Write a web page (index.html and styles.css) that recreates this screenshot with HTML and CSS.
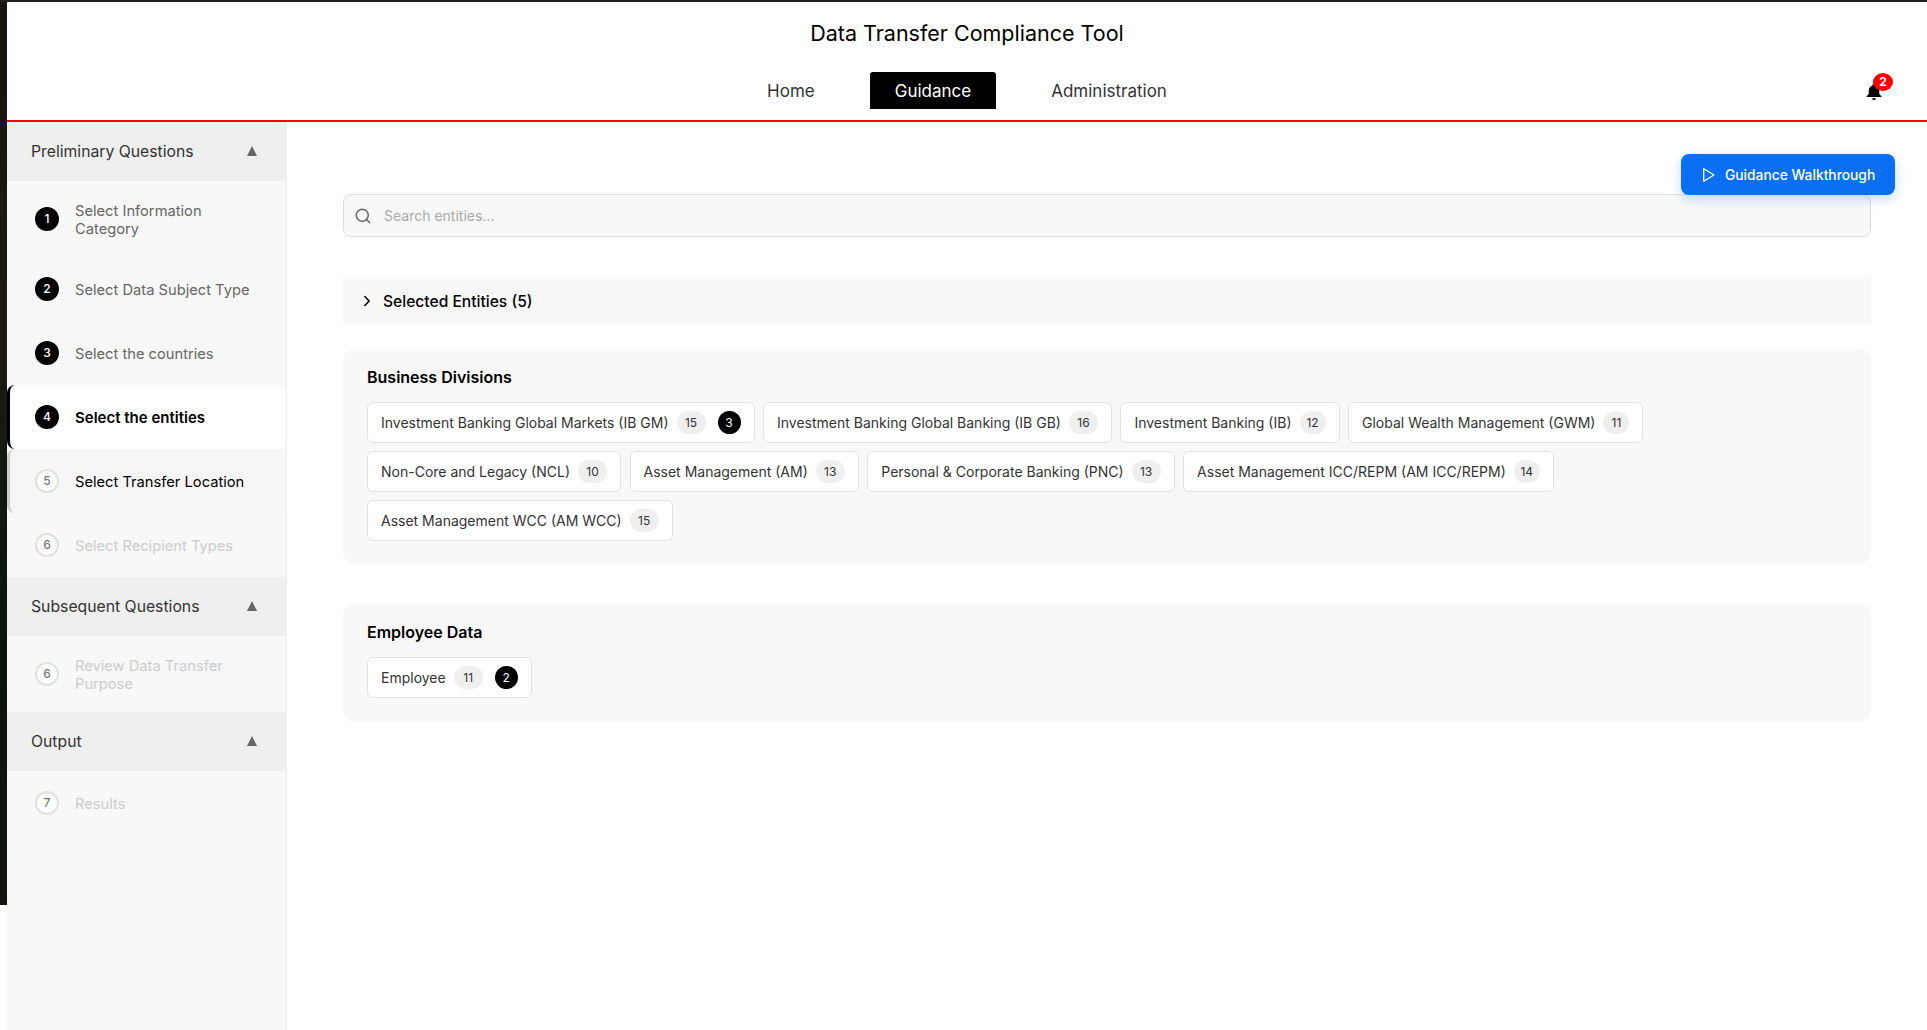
FILE: index.html
```html
<!DOCTYPE html>
<html lang="en">
<head>
  <meta charset="UTF-8">
  <meta name="viewport" content="width=device-width, initial-scale=1">
  <title>Data Transfer Compliance Tool</title>
  <link rel="stylesheet" href="styles.css">
</head>
<body>

  <div class="edge"></div>

  <div class="app">
    <header class="topbar">
      <h1>Data Transfer Compliance Tool</h1>
      <div class="nav-row">
        <nav class="nav">
          <a class="nav-item">Home</a>
          <a class="nav-item active">Guidance</a>
          <a class="nav-item">Administration</a>
        </nav>
        <div class="bell">
          <svg width="18" height="18" viewBox="0 0 24 24" fill="#000"><path d="M12 2a2 2 0 0 0-2 2v.6C6.800 5.500 5 8.300 5 11.500V16l-3 3v1h20v-1l-3-3v-4.500c0-3.200-1.800-6-5-6.900V4a2 2 0 0 0-2-2z"/><path d="M9.500 21.500h5a2.500 2.500 0 0 1-5 0z"/></svg>
          <span class="bell-count">2</span>
        </div>
      </div>
    </header>

    <div class="layout">
      <aside class="sidebar">
        <div class="group-head"><span>Preliminary Questions</span><i class="caret"></i></div>
        <div class="step two-line"><span class="num">1</span><span class="label">Select Information Category</span></div>
        <div class="step"><span class="num">2</span><span class="label">Select Data Subject Type</span></div>
        <div class="step"><span class="num">3</span><span class="label">Select the countries</span></div>
        <div class="step current"><span class="num">4</span><span class="label">Select the entities</span></div>
        <div class="step next"><span class="num">5</span><span class="label">Select Transfer Location</span></div>
        <div class="step off"><span class="num">6</span><span class="label">Select Recipient Types</span></div>

        <div class="group-head"><span>Subsequent Questions</span><i class="caret"></i></div>
        <div class="step two-line off"><span class="num">6</span><span class="label">Review Data Transfer Purpose</span></div>

        <div class="group-head"><span>Output</span><i class="caret"></i></div>
        <div class="step off"><span class="num">7</span><span class="label">Results</span></div>
      </aside>

      <main class="content">
        <div class="toolbar">
          <button class="walkthrough">
            <svg width="16" height="16" viewBox="0 0 16 16" fill="none" stroke="#fff" stroke-width="1.300" stroke-linejoin="round"><path d="M2.700 1.800v12.400L13 8z"/></svg>
            Guidance Walkthrough
          </button>
        </div>

        <div class="search">
          <svg width="18" height="18" viewBox="0 0 24 24" fill="none" stroke="#666" stroke-width="2" stroke-linecap="round"><circle cx="11" cy="11" r="8"/><path d="M21 21l-4.300-4.300"/></svg>
          <span>Search entities...</span>
        </div>

        <div class="selected">
          <svg width="18" height="18" viewBox="0 0 18 18" fill="none" stroke="#000" stroke-width="1.600" stroke-linecap="round" stroke-linejoin="round"><path d="M6.800 4.500L11.200 9l-4.400 4.500"/></svg>
          <span>Selected Entities (5)</span>
        </div>

        <section class="panel">
          <h3>Business Divisions</h3>
          <div class="chips">
            <div class="chip">Investment Banking Global Markets (IB GM) <span class="count">15</span><span class="picked">3</span></div>
            <div class="chip">Investment Banking Global Banking (IB GB) <span class="count">16</span></div>
            <div class="chip">Investment Banking (IB) <span class="count narrow">12</span></div>
            <div class="chip">Global Wealth Management (GWM) <span class="count narrow">11</span></div>
            <div class="chip">Non-Core and Legacy (NCL) <span class="count">10</span></div>
            <div class="chip">Asset Management (AM) <span class="count">13</span></div>
            <div class="chip">Personal &amp; Corporate Banking (PNC) <span class="count">13</span></div>
            <div class="chip">Asset Management ICC/REPM (AM ICC/REPM) <span class="count narrow">14</span></div>
            <div class="chip">Asset Management WCC (AM WCC) <span class="count">15</span></div>
          </div>
        </section>

        <section class="panel employee">
          <h3>Employee Data</h3>
          <div class="chips">
            <div class="chip">Employee <span class="count">11</span><span class="picked">2</span></div>
          </div>
        </section>
      </main>
    </div>
  </div>

</body>
</html>
```

FILE: styles.css
```css
* {
  box-sizing: border-box;
}
html, body {
  height: 100%;
}
body {
  margin: 0;
  display: flex;
  align-items: flex-start;
  font-family: Inter, 'Noto Sans', sans-serif;
  color: #000;
  background: #fff;
  border-top: 2px solid #222;
  overflow: hidden;
}
.edge {
  flex: 0 0 7px;
  height: 903px;
  background: linear-gradient(180deg, #17140f, #1a1a12 40%, #0c1410 70%, #141411);
}
.app {
  flex: 1;
  min-width: 0;
  height: 100%;
  display: flex;
  flex-direction: column;
}

/* header */
.topbar {
  height: 120px;
  flex: none;
  border-bottom: 2px solid #f00;
  padding-top: 17px;
  text-align: center;
}
.topbar h1 {
  margin: 0;
  font-size: 21.500px;
  line-height: 28px;
  font-weight: 400;
}
.nav-row {
  display: grid;
  grid-template-columns: 1fr auto 1fr;
  margin-top: 25px;
}
.nav {
  grid-column: 2;
  display: flex;
  gap: 31px;
}
.nav-item {
  height: 37px;
  padding: 0 24.500px;
  font-size: 17px;
  line-height: 39px;
  color: #333;
}
.nav-item.active {
  background: #000;
  color: #fff;
  border-radius: 3px 3px 0 0;
}
.bell {
  position: relative;
  justify-self: end;
  margin: 10px 44px 0 0;
  line-height: 0;
}
.bell-count {
  position: absolute;
  left: 8px;
  top: -9px;
  width: 20px;
  height: 18px;
  border-radius: 50%;
  background: #f00;
  color: #fff;
  font-size: 12px;
  font-weight: 700;
  line-height: 18px;
  text-align: center;
}

.layout {
  flex: 1;
  display: flex;
  min-height: 0;
}

/* sidebar */
.sidebar {
  flex: 0 0 280px;
  background: #f8f8f8;
  border-right: 1px solid #eee;
}
.group-head {
  display: flex;
  justify-content: space-between;
  align-items: center;
  height: 59px;
  padding: 0 29px 1px 24px;
  background: #efefef;
  font-size: 15.750px;
  color: #333;
}
.caret {
  width: 0;
  height: 0;
  border-left: 5.500px solid transparent;
  border-right: 5.500px solid transparent;
  border-bottom: 10px solid #666;
}
.step {
  display: flex;
  align-items: center;
  height: 64px;
  padding-left: 28px;
  font-size: 14.700px;
  line-height: 18px;
  color: #666;
}
.step.two-line {
  height: 76px;
}
.step .label {
  margin-left: 16px;
  padding-top: 1px;
  max-width: 180px;
}
.num {
  flex: none;
  width: 24px;
  height: 24px;
  border-radius: 50%;
  background: #000;
  color: #fff;
  font-size: 12px;
  font-weight: 500;
  line-height: 24px;
  text-align: center;
}
.step.current {
  background: #fff;
  color: #000;
  font-size: 15px;
  font-weight: 600;
  border-left: 3px solid #000;
  border-radius: 8px;
  padding-left: 25px;
}
.step.current .label {
  white-space: nowrap;
}
.step.next {
  background: #f6f6f6;
  color: #000;
  border-left: 3px solid #ccc;
  border-radius: 8px;
  padding-left: 25px;
}
.step.next .num,
.step.off .num {
  background: #fff;
  color: #777;
  border: 2px solid #e0e0e0;
  line-height: 20px;
}
.step.off {
  color: #ccc;
}

/* main area */
.content {
  flex: 1;
  min-width: 0;
  padding: 0 56px;
}
.toolbar {
  display: flex;
  justify-content: flex-end;
  height: 32px;
  margin-right: -24px;
  padding-top: 32px;
}
.walkthrough {
  position: relative;
  display: flex;
  align-items: center;
  gap: 8px;
  height: 41px;
  width: 214px;
  padding: 0 20px;
  border: 0;
  border-radius: 8px;
  background: #0a6ff2;
  color: #fff;
  font-family: inherit;
  font-size: 13.800px;
  font-weight: 500;
  white-space: nowrap;
  box-shadow: 0 4px 12px rgba(10, 111, 242, 0.25);
}
.walkthrough svg {
  flex: none;
}
.search {
  display: flex;
  align-items: center;
  gap: 12px;
  height: 43px;
  margin-top: 40px;
  padding: 0 10px;
  background: #f8f8f8;
  border: 1px solid #ddd;
  border-radius: 8px;
  font-size: 14px;
  color: #aaa;
}
.selected {
  display: flex;
  align-items: center;
  gap: 7px;
  height: 48px;
  margin-top: 40px;
  padding: 0 15px;
  background: #f8f8f8;
  font-size: 15.600px;
  font-weight: 500;
}
.panel {
  margin-top: 24px;
  padding: 18px 24px 23px;
  background: #f8f8f8;
  border-radius: 12px;
}
.panel.employee {
  margin-top: 39px;
  padding: 19px 24px 24px;
}
.panel h3 {
  margin: 0 0 15px;
  font-size: 16px;
  line-height: 20px;
  font-weight: 600;
}
.chips {
  display: flex;
  flex-wrap: wrap;
  gap: 8px 8.500px;
}
.chip {
  display: flex;
  align-items: center;
  height: 41px;
  padding: 0 13px;
  background: #fff;
  border: 1px solid #e2e2e2;
  border-radius: 6px;
  font-size: 14px;
  color: #333;
  white-space: nowrap;
}
.count {
  margin-left: 8px;
  min-width: 29px;
  height: 23px;
  padding: 0 7px;
  border-radius: 12px;
  background: #efefef;
  font-size: 12px;
  line-height: 23px;
  text-align: center;
}
.count.narrow {
  min-width: 26px;
  padding: 0 4px;
}
.picked {
  width: 23px;
  height: 23px;
  margin-left: 12px;
  border-radius: 50%;
  background: #000;
  color: #fff;
  font-size: 12px;
  line-height: 23px;
  text-align: center;
}
```
